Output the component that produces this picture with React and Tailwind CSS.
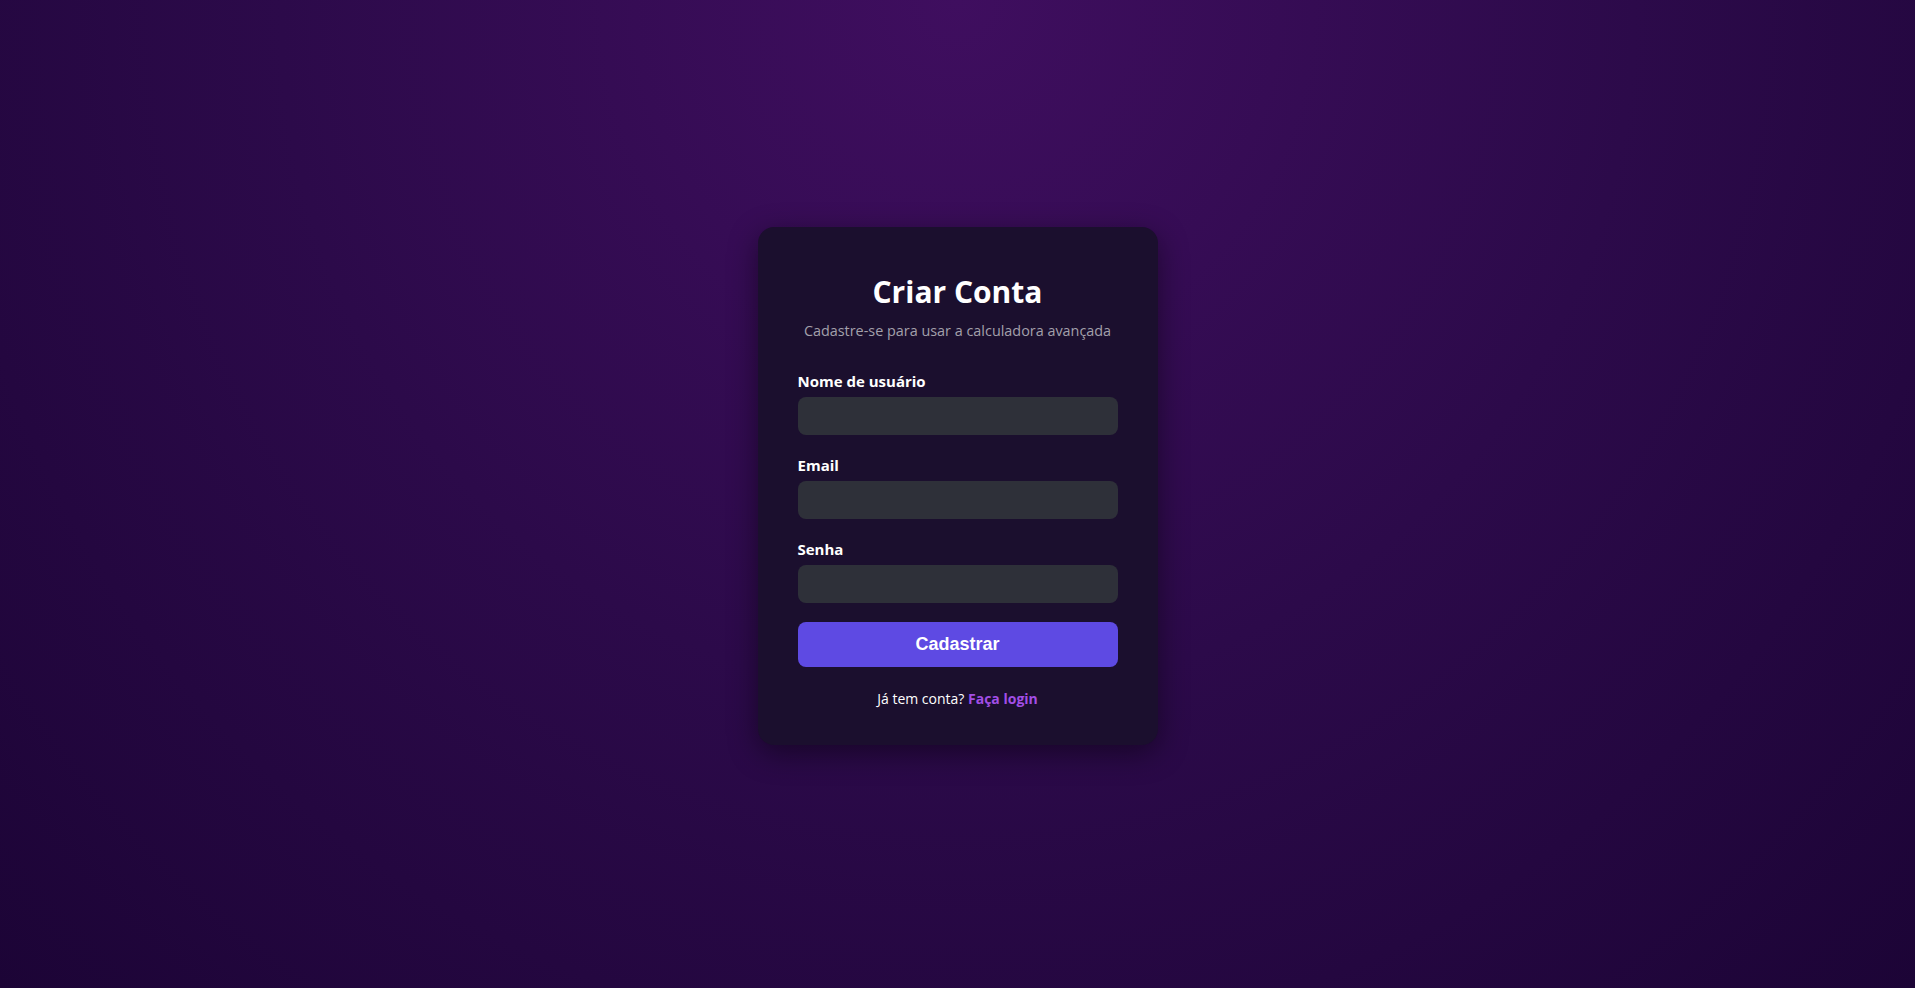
export default function App() {
  return (
    <div
      className="min-h-screen w-full flex items-center justify-center pb-4 bg-[radial-gradient(ellipse_at_top,#3f0e5f_0%,#2c0a4a_50%,#1c0436_100%)]"
      style={{ fontFamily: '"Open Sans", "Noto Sans", sans-serif' }}
    >
      <div className="w-[400px] rounded-2xl bg-[#1b0f2e] px-10 pt-[45px] pb-[36px] shadow-[0_8px_30px_rgba(0,0,0,0.45)]">
        <h1 className="text-center text-[30px] font-bold leading-[40px] text-white">
          Criar Conta
        </h1>
        <p className="mt-2 text-center text-[14.4px] text-[#a3a0ab]">
          Cadastre-se para usar a calculadora avançada
        </p>

        <form className="mt-[30px] flex flex-col" onSubmit={(e) => e.preventDefault()}>
          <Field label="Nome de usuário" type="text" />
          <Field label="Email" type="email" />
          <Field label="Senha" type="password" last />

          <button
            type="submit"
            className="mt-[19px] h-[45px] w-full rounded-lg bg-[#5e4ae3] text-[18px] font-bold text-white"
            style={{ fontFamily: '"Liberation Sans", Arial, sans-serif' }}
          >
            Cadastrar
          </button>
        </form>

        <p className="mt-[21px] text-center text-[14px] text-white">
          Já tem conta? <a href="#" className="font-bold text-[#a24ee6]">Faça login</a>
        </p>
      </div>
    </div>
  );
}

function Field({ label, type, last }) {
  return (
    <div className={last ? 'flex flex-col' : 'mb-[20px] flex flex-col'}>
      <label className="mb-[6px] text-[15px] font-bold leading-5 text-white">{label}</label>
      <input
        type={type}
        className="h-[38px] w-full rounded-lg bg-[#2e3039] px-3 text-white outline-none"
      />
    </div>
  );
}
